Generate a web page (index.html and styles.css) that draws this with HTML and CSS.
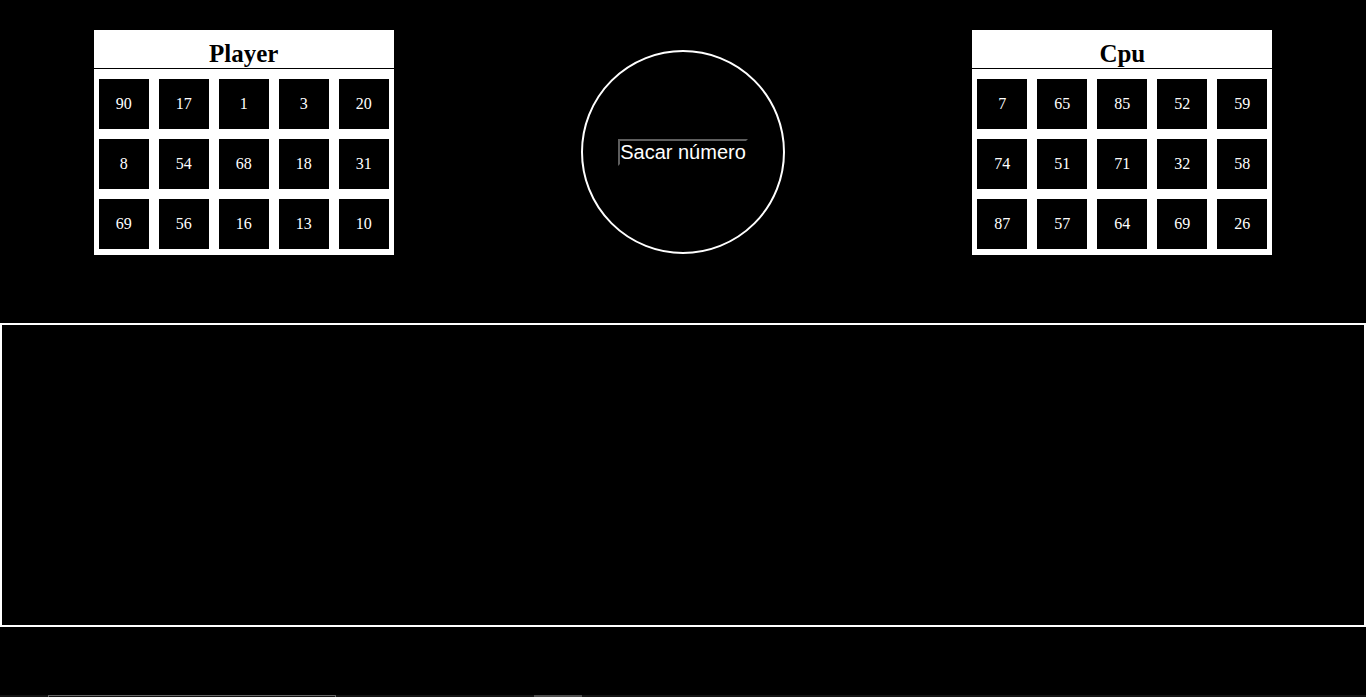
FILE: index.html
```html
<!DOCTYPE html>
<html lang="es">
<head>
<meta charset="utf-8">
<title>Bingo</title>
<link rel="stylesheet" href="styles.css">
</head>
<body>
<div class="top">
  <div class="card">
    <h2 class="card-title">Player</h2>
    <div class="grid">
      <div class="cell">90</div><div class="cell">17</div><div class="cell">1</div><div class="cell">3</div><div class="cell">20</div>
      <div class="cell">8</div><div class="cell">54</div><div class="cell">68</div><div class="cell">18</div><div class="cell">31</div>
      <div class="cell">69</div><div class="cell">56</div><div class="cell">16</div><div class="cell">13</div><div class="cell">10</div>
    </div>
  </div>
  <div class="ball">
    <span class="draw">Sacar número</span>
  </div>
  <div class="card">
    <h2 class="card-title">Cpu</h2>
    <div class="grid">
      <div class="cell">7</div><div class="cell">65</div><div class="cell">85</div><div class="cell">52</div><div class="cell">59</div>
      <div class="cell">74</div><div class="cell">51</div><div class="cell">71</div><div class="cell">32</div><div class="cell">58</div>
      <div class="cell">87</div><div class="cell">57</div><div class="cell">64</div><div class="cell">69</div><div class="cell">26</div>
    </div>
  </div>
</div>
<div class="board"></div>
<div class="footer">
  <div class="foot-box"></div>
  <div class="foot-block"></div>
</div>
</body>
</html>
```

FILE: styles.css
```css
html {
  overflow: hidden;
  background: #000;
}
body {
  margin: 0;
  background: #000;
  font-family: "Liberation Serif", "Times New Roman", serif;
  color: #fff;
}
.top {
  display: flex;
  justify-content: space-around;
  align-items: flex-start;
  padding-top: 30px;
}
.card {
  width: 300px;
  background: #fff;
}
.card-title {
  margin: 0;
  padding-top: 10px;
  height: 28px;
  font-size: 25px;
  font-weight: bold;
  line-height: 28px;
  text-align: center;
  color: #000;
  border-bottom: 1px solid #000;
}
.grid {
  display: grid;
  grid-template-columns: repeat(5, 50px);
  grid-auto-rows: 50px;
  gap: 10px;
  padding: 10px 5px 6px 5px;
}
.cell {
  background: #000;
  color: #fff;
  font-size: 16px;
  display: flex;
  align-items: center;
  justify-content: center;
}
.ball {
  margin-top: 20px;
  width: 200px;
  height: 200px;
  border: 2px solid #fff;
  border-radius: 50%;
  display: flex;
  align-items: center;
  justify-content: center;
}
.draw {
  font-family: "Liberation Sans", Arial, sans-serif;
  font-size: 20px;
  line-height: normal;
  color: #fff;
  border: 2px solid #000;
  border-top-color: #5e5e5e;
  border-left-color: #5e5e5e;
}
.board {
  margin-top: 68px;
  height: 300px;
  border: 2px solid #fff;
}
.footer {
  margin-top: 68px;
  height: 40px;
  background: #141414;
  display: flex;
  align-items: flex-start;
}
.foot-box {
  margin-left: 48px;
  width: 286px;
  height: 30px;
  border: 1px solid #666;
}
.foot-block {
  margin-left: 198px;
  width: 48px;
  height: 30px;
  background: #4d4d4d;
}
```
